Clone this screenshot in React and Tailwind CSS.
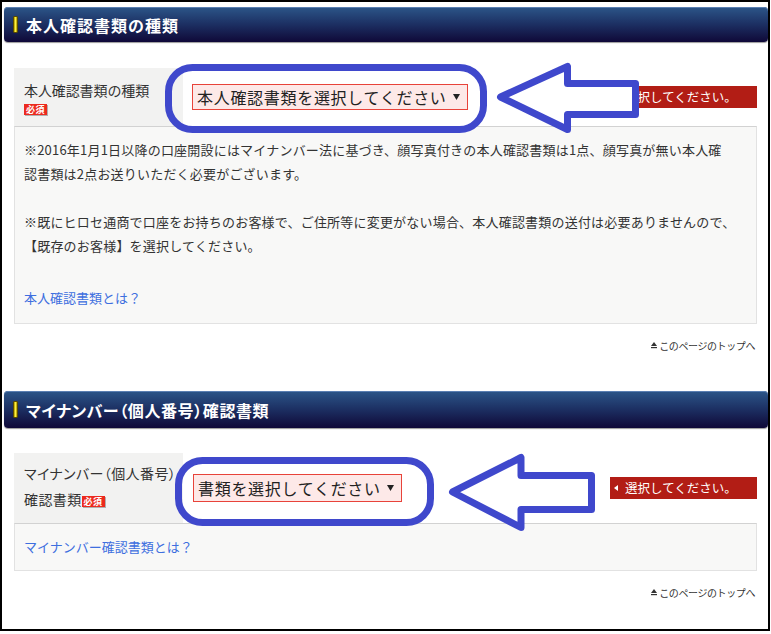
import React from "react";

function Header({ title, h, palt }) {
  return (
    <div className={`${h} w-full rounded-[4px] bg-gradient-to-b from-[#2c5689] via-[#1c2f62] to-[#0f0838] shadow-[inset_0_1px_0_#5a7fb2,0_1px_1px_rgba(0,0,0,0.4)] flex items-center pl-[9px]`}>
      <div className="w-[5px] h-[17px] rounded-[1px] bg-gradient-to-r from-[#a89200] via-[#fff23a] to-[#a89200] border border-[#5a4c00]" />
      <div className={`ml-[8px] text-white text-[16px] font-bold leading-none ${palt}`}>{title}</div>
    </div>
  );
}

function Badge() {
  return (
    <span className="inline-block h-[11px] px-[2px] bg-[#ec2a1e] text-white text-[9px] font-bold leading-[11px] tracking-[0.5px] shadow-[1px_1px_0_#b0b0b0] align-middle">
      必須
    </span>
  );
}

function Caret() {
  return (
    <svg width="7" height="6" viewBox="0 0 7 6" className="ml-[6px] shrink-0">
      <path d="M0 0 H7 L3.5 6 Z" fill="#222" />
    </svg>
  );
}

function ErrorBox() {
  return (
    <div className="w-[147px] h-[22px] bg-[#b21d15] text-white text-[12.5px] leading-[22px] flex items-center pl-[4px]">
      <svg width="4" height="6" viewBox="0 0 4 6" className="shrink-0">
        <path d="M4 0 V6 L0 3 Z" fill="#fff" />
      </svg>
      <span className="ml-[7px]">選択してください。</span>
    </div>
  );
}

function TopLink() {
  return (
    <div className="flex justify-end items-center h-[12px] mt-[15px] mr-[2px] text-[10px] text-[#333] tracking-[-0.4px]">
      <svg width="6" height="7" viewBox="0 0 6 7" className="mr-[2px]">
        <path d="M3 0 L6 4 H0 Z" fill="#333" />
        <rect x="0" y="5" width="6" height="1.2" fill="#333" />
      </svg>
      <span>このページのトップへ</span>
    </div>
  );
}

export default function App() {
  return (
    <div className="relative w-[771px] h-[634px] bg-white text-[#333] font-['Noto_Sans_CJK_JP','Noto_Sans',sans-serif]">
      <div className="w-[770px] h-[631px] border-2 border-black pl-[2px] pt-[5px]">
        <Header title="本人確認書類の種類" h="h-[35px]" palt="tracking-[1px]" />
        <div className="ml-[10px] mr-[11px] mt-[26px]">
          <div className="flex">
            <div className="w-[169px] shrink-0 bg-[#f2f2f1] pl-[10px] pt-[12px] pb-[12px]">
              <div className="text-[14px] leading-[20px] tracking-[-0.1px]">本人確認書類の種類</div>
              <div className="mt-[4px] h-[10px] flex"><Badge /></div>
            </div>
            <div className="flex-1 flex items-center justify-between pl-[9px]">
              <div className="w-[276px] h-[26px] border border-[#e8433a] bg-[#fde9e8] flex items-center pl-[4px] text-[16px] text-[#222] tracking-[0.7px] whitespace-nowrap">
                <span>本人確認書類を選択してください</span>
                <Caret />
              </div>
              <ErrorBox />
            </div>
          </div>
          <div className="border border-[#e2e2e2] border-t-[#d2d2d2] bg-[#f8f8f7] pl-[9px] pt-[11px] pb-[13px] text-[13px] leading-[24px] tracking-[0.2px] whitespace-nowrap">
            <p>
              ※2016年1月1日以降の口座開設にはマイナンバー法に基づき、顔写真付きの本人確認書類は1点、顔写真が無い本人確
              <br />
              認書類は2点お送りいただく必要がございます。
            </p>
            <p className="mt-[24px]">
              ※既にヒロセ通商で口座をお持ちのお客様で、ご住所等に変更がない場合、本人確認書類の送付は必要ありませんので、
              <br />
              【既存のお客様】を選択してください。
            </p>
            <p className="mt-[28px]">
              <a className="text-[#3e6fdf] tracking-[0px]">本人確認書類とは？</a>
            </p>
          </div>
          <TopLink />
        </div>

        <div className="mt-[40px]">
          <Header title="マイナンバー（個人番号）確認書類" h="h-[37px]" palt="tracking-[0.6px] [font-feature-settings:'palt']" />
        </div>
        <div className="ml-[10px] mr-[11px] mt-[25px]">
          <div className="flex">
            <div className="w-[169px] shrink-0 bg-[#f2f2f1] pl-[10px] pt-[7px] pb-[11px] text-[14px] leading-[26px] [font-feature-settings:'palt'] tracking-[0.4px]">
              <div className="whitespace-nowrap">マイナンバー（個人番号）</div>
              <div className="whitespace-nowrap">
                確認書類<Badge />
              </div>
            </div>
            <div className="flex-1 flex items-center justify-between pl-[10px]">
              <div className="w-[209px] h-[28px] border border-[#e8433a] bg-[#fde9e8] flex items-center pl-[4px] text-[16px] text-[#222] tracking-[0.7px] whitespace-nowrap">
                <span>書類を選択してください</span>
                <Caret />
              </div>
              <ErrorBox />
            </div>
          </div>
          <div className="border border-[#e2e2e2] border-t-[#d2d2d2] bg-[#f8f8f7] pl-[9px] pt-[11px] pb-[11px] text-[13px] leading-[24px]">
            <a className="text-[#3e6fdf]">マイナンバー確認書類とは？</a>
          </div>
          <TopLink />
        </div>
      </div>

      <svg
        className="absolute left-0 top-0 pointer-events-none"
        width="771"
        height="634"
        viewBox="0 0 771 634"
      >
        <g stroke="#3f48cc" strokeWidth="7" strokeLinejoin="round">
          <rect x="168.5" y="67.5" width="315" height="62" rx="24" fill="none" />
          <path d="M500.5 97 L567.5 66.5 L567.5 83.5 L635.5 83.5 L635.5 114.5 L567.5 114.5 L567.5 129.5 Z" fill="#fff" />
          <rect x="178.5" y="460.5" width="252" height="62" rx="24" fill="none" />
          <path d="M452.5 492 L521 457.5 L521 475.5 L591.5 475.5 L591.5 509.5 L521 509.5 L521 527.5 Z" fill="#fff" />
        </g>
      </svg>
    </div>
  );
}
